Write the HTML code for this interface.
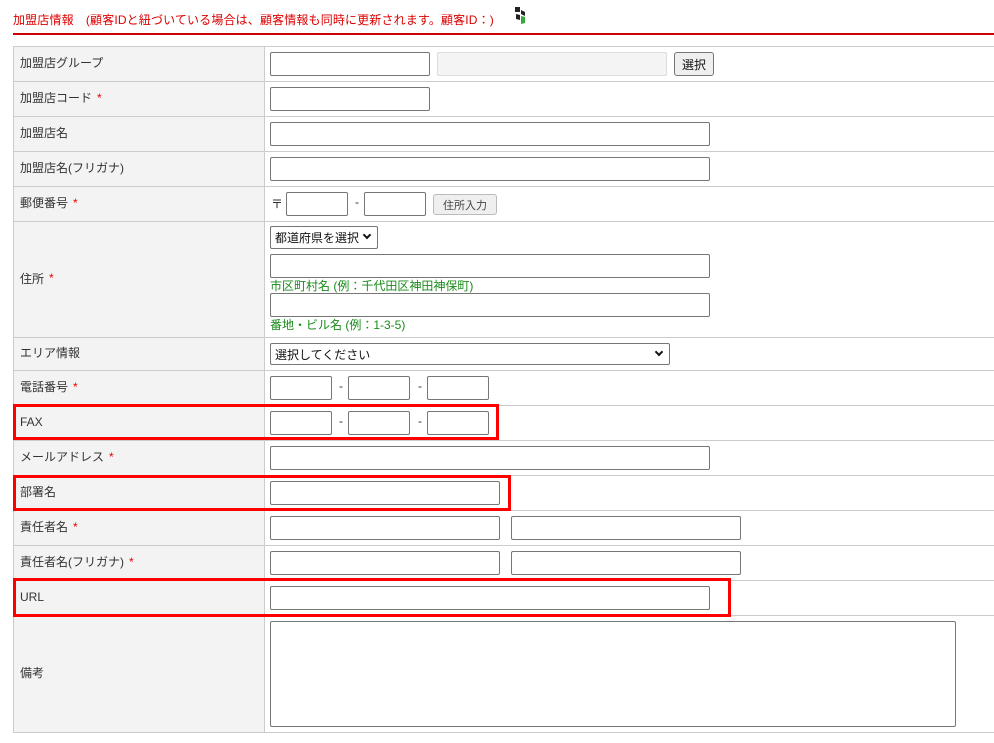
<!DOCTYPE html><html><head><meta charset="utf-8"><style>
body{margin:0;width:994px;height:743px;background:#fff;font-family:"Liberation Sans","Noto Sans CJK JP",sans-serif;font-size:12px;color:#333;position:relative;overflow:hidden}
.a{position:absolute;box-sizing:border-box}
.lab{position:absolute;left:13px;width:252px;background:#f2f3f2;border-top:1px solid #ccc;border-left:1px solid #ccc;border-right:1px solid #ccc;box-sizing:border-box;padding-left:6px;padding-bottom:3px;display:flex;align-items:center}
.line{position:absolute;left:264px;right:0;height:1px;background:#ccc}
.in{position:absolute;box-sizing:border-box;border:1px solid #767676;border-radius:2px;background:#fff}
.req{color:#e00;margin-left:5px}
.g{position:absolute;color:#1a8a1a;font-size:12px}
.rb{position:absolute;border:3px solid #f00;box-sizing:border-box}
.btn{position:absolute;box-sizing:border-box;border:1px solid #999;border-radius:3px;background:#efefef;display:flex;align-items:center;justify-content:center}
.sel{position:absolute;box-sizing:border-box;border:1px solid #767676;border-radius:2px;background:#fff;font-size:12px;padding-left:4px;display:flex;align-items:center;color:#111;white-space:nowrap}
.sel:after{content:"";position:absolute;right:7px;top:5px;width:4px;height:4px;border-right:2px solid #111;border-bottom:2px solid #111;transform:rotate(45deg)}
</style></head><body>
<div class="a" style="left:13px;top:11px;color:#d00;font-size:12px;letter-spacing:0.15px;white-space:nowrap">加盟店情報　(顧客IDと紐づいている場合は、顧客情報も同時に更新されます。顧客ID：)</div>
<svg class="a" style="left:513px;top:5px" width="14" height="20"><path d="M2 2h5v5H2z" fill="#222"/><path d="M8 5l4 2v4l-4-2z" fill="#222"/><path d="M3 9l4 1v5l-4-1z" fill="#222"/><path d="M8 11l4 1v6l-4 1z" fill="#3a3"/></svg>
<div class="a" style="left:13px;top:33px;width:981px;height:2px;background:#c00"></div>

<div class="lab" style="top:46px;height:35px">加盟店グループ</div>
<div class="lab" style="top:81px;height:35px">加盟店コード<span class="req">*</span></div>
<div class="lab" style="top:116px;height:35px">加盟店名</div>
<div class="lab" style="top:151px;height:35px">加盟店名(フリガナ)</div>
<div class="lab" style="top:186px;height:35px">郵便番号<span class="req">*</span></div>
<div class="lab" style="top:221px;height:116px">住所<span class="req">*</span></div>
<div class="lab" style="top:337px;height:33px">エリア情報</div>
<div class="lab" style="top:370px;height:35px">電話番号<span class="req">*</span></div>
<div class="lab" style="top:405px;height:35px">FAX</div>
<div class="lab" style="top:440px;height:35px">メールアドレス<span class="req">*</span></div>
<div class="lab" style="top:475px;height:35px">部署名</div>
<div class="lab" style="top:510px;height:35px">責任者名<span class="req">*</span></div>
<div class="lab" style="top:545px;height:35px">責任者名(フリガナ)<span class="req">*</span></div>
<div class="lab" style="top:580px;height:35px">URL</div>
<div class="lab" style="top:615px;height:118px;border-bottom:1px solid #ccc">備考</div>
<div class="line" style="top:46px"></div><div class="line" style="top:81px"></div><div class="line" style="top:116px"></div><div class="line" style="top:151px"></div><div class="line" style="top:186px"></div><div class="line" style="top:221px"></div><div class="line" style="top:337px"></div><div class="line" style="top:370px"></div><div class="line" style="top:405px"></div><div class="line" style="top:440px"></div><div class="line" style="top:475px"></div><div class="line" style="top:510px"></div><div class="line" style="top:545px"></div><div class="line" style="top:580px"></div><div class="line" style="top:615px"></div><div class="line" style="top:732px"></div>

<div class="in" style="left:270px;top:52px;width:160px;height:24px"></div>
<div class="a" style="left:437px;top:52px;width:230px;height:24px;background:#f4f4f4;border:1px solid #ddd;border-radius:2px"></div>
<div class="btn" style="left:674px;top:52px;width:40px;height:24px;border-color:#767676;font-size:12px;color:#111">選択</div>
<div class="in" style="left:270px;top:87px;width:160px;height:24px"></div>
<div class="in" style="left:270px;top:122px;width:440px;height:24px"></div>
<div class="in" style="left:270px;top:157px;width:440px;height:24px"></div>
<div class="a" style="left:271px;top:195px">〒</div>
<div class="in" style="left:286px;top:192px;width:62px;height:24px"></div>
<div class="a" style="left:355px;top:195px">-</div>
<div class="in" style="left:364px;top:192px;width:62px;height:24px"></div>
<div class="btn" style="left:433px;top:194px;width:64px;height:21px;font-size:11px;color:#444;border-color:#bbb">住所入力</div>
<div class="sel" style="left:270px;top:226px;width:108px;height:23px">都道府県を選択</div>
<div class="in" style="left:270px;top:254px;width:440px;height:24px"></div>
<div class="g" style="left:270px;top:277px">市区町村名 (例：千代田区神田神保町)</div>
<div class="in" style="left:270px;top:293px;width:440px;height:24px"></div>
<div class="g" style="left:270px;top:316px">番地・ビル名 (例：1-3-5)</div>
<div class="sel" style="left:270px;top:343px;width:400px;height:22px">選択してください</div>
<div class="in" style="left:270px;top:376px;width:62px;height:24px"></div><div class="a" style="left:339px;top:379px">-</div>
<div class="in" style="left:348px;top:376px;width:62px;height:24px"></div><div class="a" style="left:418px;top:379px">-</div>
<div class="in" style="left:427px;top:376px;width:62px;height:24px"></div>
<div class="in" style="left:270px;top:411px;width:62px;height:24px"></div><div class="a" style="left:339px;top:414px">-</div>
<div class="in" style="left:348px;top:411px;width:62px;height:24px"></div><div class="a" style="left:418px;top:414px">-</div>
<div class="in" style="left:427px;top:411px;width:62px;height:24px"></div>
<div class="in" style="left:270px;top:446px;width:440px;height:24px"></div>
<div class="in" style="left:270px;top:481px;width:230px;height:24px"></div>
<div class="in" style="left:270px;top:516px;width:230px;height:24px"></div>
<div class="in" style="left:511px;top:516px;width:230px;height:24px"></div>
<div class="in" style="left:270px;top:551px;width:230px;height:24px"></div>
<div class="in" style="left:511px;top:551px;width:230px;height:24px"></div>
<div class="in" style="left:270px;top:586px;width:440px;height:24px"></div>
<div class="in" style="left:270px;top:621px;width:686px;height:106px"></div>

<div class="rb" style="left:13px;top:404px;width:486px;height:36px"></div>
<div class="rb" style="left:13px;top:475px;width:498px;height:36px"></div>
<div class="rb" style="left:13px;top:578px;width:718px;height:39px"></div>
</body></html>
